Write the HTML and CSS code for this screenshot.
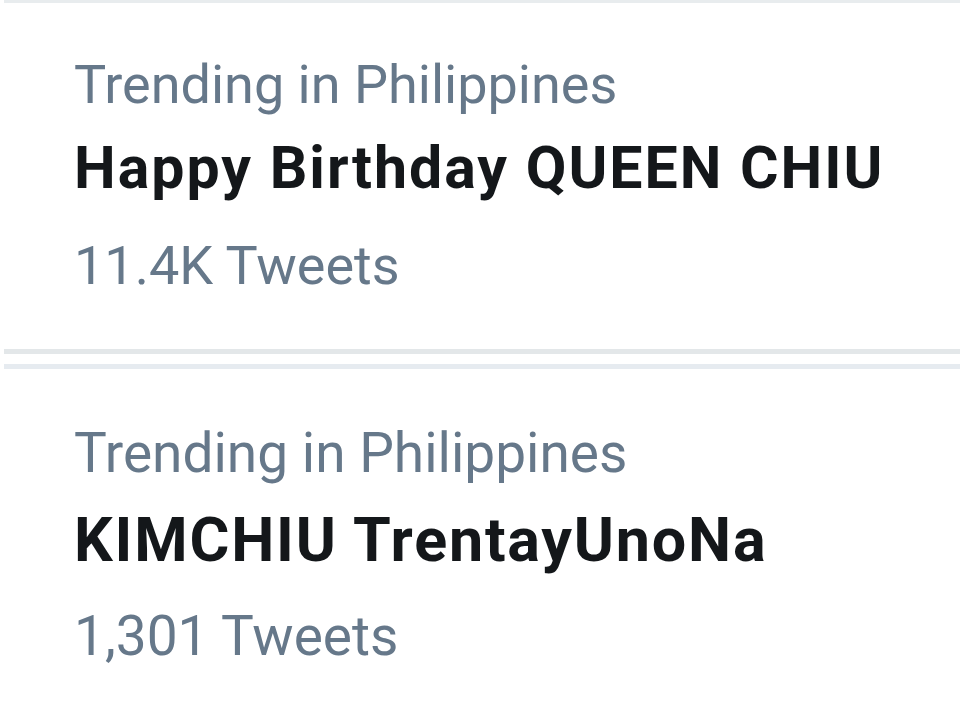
FILE: index.html
```html
<!DOCTYPE html>
<html>
<head>
<meta charset="utf-8">
<link rel="stylesheet" href="styles.css">
</head>
<body>
<div class="list">
  <div class="trend first">
    <div class="meta">Trending in Philippines</div>
    <div class="title">Happy Birthday QUEEN CHIU</div>
    <div class="count">11.4K Tweets</div>
  </div>
  <div class="trend second">
    <div class="meta">Trending in Philippines</div>
    <div class="title">KIMCHIU TrentayUnoNa</div>
    <div class="count">1,301 Tweets</div>
  </div>
</div>
</body>
</html>
```
FILE: styles.css
```css
html, body {
  margin: 0;
  padding: 0;
  background: #ffffff;
}
body {
  font-family: Roboto, "Liberation Sans", sans-serif;
  width: 960px;
  height: 720px;
  overflow: hidden;
}
.list {
  margin-left: 4px;
  border-top: 3px solid #e8ecee;
}
.trend {
  padding-left: 70px;
}
.meta,
.count {
  color: #66788a;
  line-height: 64px;
}
.title {
  color: #14171a;
  font-weight: 700;
  line-height: 76px;
}
.first {
  height: 351px;
  box-sizing: border-box;
  padding-top: 50px;
  border-bottom: 5px solid #e3e7e9;
}
.first .meta {
  font-size: 54px;
}
.first .title {
  font-size: 59px;
  letter-spacing: 2px;
  margin-top: 13px;
}
.first .count {
  font-size: 54px;
  margin-top: 28px;
}
.second {
  margin-top: 10px;
  border-top: 5px solid #e6ebf0;
  padding-top: 52px;
}
.second .meta {
  font-size: 55px;
}
.second .title {
  font-size: 61px;
  letter-spacing: 1.8px;
  margin-top: 17px;
}
.second .count {
  font-size: 55px;
  margin-top: 26px;
}
```
